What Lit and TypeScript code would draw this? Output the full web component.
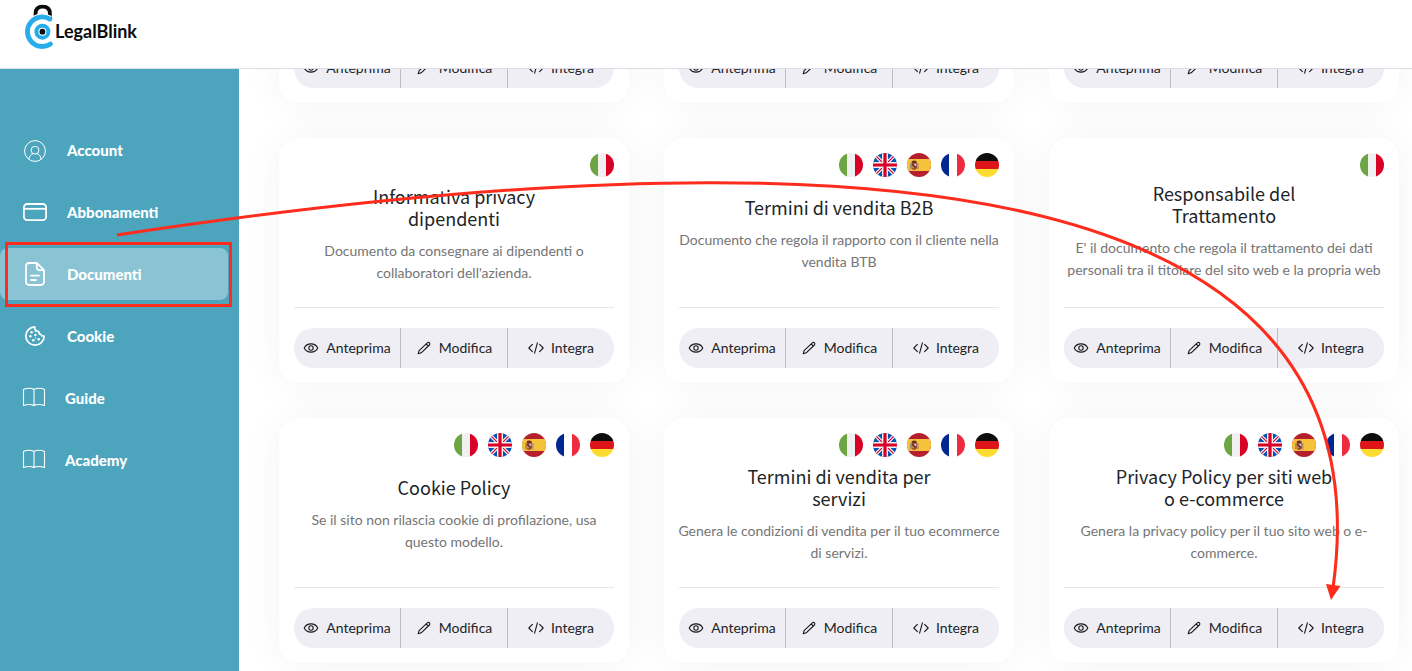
import { LitElement, html, svg, css, TemplateResult } from "lit";
import { customElement, property, query } from "lit/decorators.js";
import { classMap } from "lit/directives/class-map.js";

type Lang = "it" | "en" | "es" | "fr" | "de";

const LANG_NAMES: Record<Lang, string> = {
  it: "Italiano",
  en: "English",
  es: "Español",
  fr: "Français",
  de: "Deutsch",
};

const FLAGS: Record<Lang, TemplateResult> = {
  it: svg`<rect width="24" height="24" fill="#f0f0f0"/><rect width="8" height="24" fill="#6da544"/><rect x="16" width="8" height="24" fill="#d80027"/>`,
  en: svg`<rect width="24" height="24" fill="#0052b4"/>
    <path d="M0 0 24 24M24 0 0 24" stroke="#f0f0f0" stroke-width="3.6"/>
    <path d="M0 0 24 24M24 0 0 24" stroke="#d80027" stroke-width="1.2"/>
    <path d="M12 0V24M0 12H24" stroke="#f0f0f0" stroke-width="6"/>
    <path d="M12 0V24M0 12H24" stroke="#d80027" stroke-width="3.2"/>`,
  es: svg`<rect width="24" height="24" fill="#b5202f"/><rect y="6" width="24" height="12" fill="#f5c33b"/>
    <path d="M3.6 10V16.4M10.8 10V16.4" stroke="#a98c78" stroke-width="1.3"/>
    <path d="M4.6 10.200H9.800V14.500Q9.800 16.800 7.200 16.800 4.600 16.800 4.600 14.500Z" fill="#8c352f"/>
    <path d="M7.200 10.700H9.200V13H7.200Z" fill="#d9c9c9"/><path d="M5 13H7.200V15.800Q5 15.600 5 14.400Z" fill="#d98b2b"/>
    <path d="M4.800 10.200Q4 7.600 7.200 7.600 10.400 7.600 9.600 10.200Z" fill="#6e3024"/><circle cx="7.200" cy="13.200" r="1" fill="#3b3f77"/>`,
  fr: svg`<rect width="24" height="24" fill="#fff"/><rect width="8" height="24" fill="#00268f"/><rect x="16" width="8" height="24" fill="#ee2c3f"/>`,
  de: svg`<rect width="24" height="8" fill="#0d0d0d"/><rect y="8" width="24" height="8" fill="#dd1518"/><rect y="16" width="24" height="8" fill="#fedb30"/>`,
};

interface DocumentItem {
  title: string;
  text: string;
  langs: Lang[];
  clamped?: boolean;
}

const ALL: Lang[] = ["it", "en", "es", "fr", "de"];

const DOCUMENTS: DocumentItem[] = [
  { title: "", text: "", langs: ["it"] },
  { title: "", text: "", langs: ["it"] },
  { title: "", text: "", langs: ["it"] },
  {
    title: "Informativa privacy dipendenti",
    text: "Documento da consegnare ai dipendenti o collaboratori dell'azienda.",
    langs: ["it"],
  },
  {
    title: "Termini di vendita B2B",
    text: "Documento che regola il rapporto con il cliente nella vendita BTB",
    langs: ALL,
  },
  {
    title: "Responsabile del Trattamento",
    text: "E' il documento che regola il trattamento dei dati personali tra il titolare del sito web e la propria web",
    langs: ["it"],
    clamped: true,
  },
  {
    title: "Cookie Policy",
    text: "Se il sito non rilascia cookie di profilazione, usa questo modello.",
    langs: ALL,
  },
  {
    title: "Termini di vendita per servizi",
    text: "Genera le condizioni di vendita per il tuo ecommerce di servizi.",
    langs: ALL,
  },
  {
    title: "Privacy Policy per siti web o e-commerce",
    text: "Genera la privacy policy per il tuo sito web o e-commerce.",
    langs: ALL,
  },
];

@customElement("document-card")
class DocumentCard extends LitElement {
  @property({ attribute: false }) item!: DocumentItem;

  static styles = css`
    :host {
      display: block;
      position: relative;
    }
    .card {
      display: flex;
      flex-direction: column;
      box-sizing: border-box;
      min-height: 245px;
      padding: 15px;
      border-radius: 20px;
      background: #fff;
    }
    .flags {
      display: flex;
      justify-content: flex-end;
      gap: 10px;
      height: 24px;
    }
    .flag {
      width: 24px;
      height: 24px;
      border-radius: 50%;
    }
    .body {
      flex: 1;
      display: flex;
      flex-direction: column;
      justify-content: center;
      padding-bottom: 16px;
      text-align: center;
    }
    .title {
      margin: 0 auto 11px;
      max-width: 220px;
      font: 400 18px/22px "Noto Sans CJK JP", "Noto Sans", sans-serif;
      color: #212427;
    }
    .text {
      margin: 0 -5px;
      font-size: 14px;
      line-height: 22px;
      color: #757575;
    }
    .clamped {
      padding-bottom: 5px;
    }
    .actions {
      display: grid;
      grid-template-columns: 107fr 107fr 106fr;
      padding-top: 20px;
      border-top: 1px solid #e8e8e8;
    }
    .action {
      display: flex;
      align-items: center;
      justify-content: center;
      gap: 7px;
      height: 40px;
      padding: 0;
      border: 0;
      border-right: 1px solid #bdbcc2;
      background: #efeef4;
      font: 400 14px/20px Lato, sans-serif;
      color: #212427;
      cursor: pointer;
    }
    .action:first-child {
      border-radius: 20px 0 0 20px;
    }
    .action:last-child {
      border-right: 0;
      border-radius: 0 20px 20px 0;
    }
    .icon {
      width: 16px;
      height: 16px;
      fill: none;
      stroke: #17181a;
      stroke-width: 1.1;
      stroke-linecap: round;
      stroke-linejoin: round;
    }
  `;

  render() {
    const { title, text, langs, clamped } = this.item;
    return html`
      <article class="card">
        <div class="flags">
          ${langs.map(
            (l) => html`<svg class="flag" viewBox="0 0 24 24" role="img" aria-label=${LANG_NAMES[l]}>${FLAGS[l]}</svg>`
          )}
        </div>
        <div class="body">
          <h2 class="title">${title}</h2>
          <p class=${classMap({ text: true, clamped: !!clamped })}>${text}</p>
        </div>
        <div class="actions">
          <button class="action" type="button">
            <svg class="icon" viewBox="0 0 16 16" aria-hidden="true">
              <path d="M1.200 8C2.600 5.200 5 3.900 8 3.900S13.400 5.200 14.800 8C13.400 10.800 11 12.100 8 12.100S2.600 10.800 1.200 8Z" />
              <circle cx="8" cy="8" r="2.200" />
            </svg>
            Anteprima
          </button>
          <button class="action" type="button">
            <svg class="icon" viewBox="0 0 16 16" aria-hidden="true">
              <path d="M2.200 13.800 3.100 10.700 11.300 2.900Q12.500 1.900 13.500 2.900 14.400 3.900 13.400 5L5.200 12.800ZM10.200 4 12.300 6.100" />
            </svg>
            Modifica
          </button>
          <button class="action" type="button">
            <svg class="icon" viewBox="0 0 16 16" aria-hidden="true">
              <path d="M4.400 4.400.800 8 4.400 11.600M11.600 4.400 15.200 8 11.600 11.600M9.400 2.800 6.600 13.200" />
            </svg>
            Integra
          </button>
        </div>
      </article>
    `;
  }
}

const BOOK = svg`<g fill="none" stroke="#fff" stroke-width="1.1" stroke-linejoin="round">
  <path d="M12 3.500C9.500 1.800 4.500 1.800 1.500 3.500V19.500C4.500 18.300 9.500 18.300 12 19.500 14.500 18.300 19.500 18.300 22.500 19.500V3.500C19.500 1.800 14.500 1.800 12 3.500ZM12 3.500V19.500"/></g>`;

const NAV: { label: string; icon: TemplateResult; active?: boolean; narrow?: boolean }[] = [
  {
    label: "Account",
    icon: svg`<g fill="none" stroke="#fff" stroke-width="1"><circle cx="12" cy="13" r="10.400"/><circle cx="12" cy="12.200" r="3.900"/>
      <path d="M5.800 21.200C6.300 18 8.300 15.900 10.200 15.600M18.200 21.200C17.700 18 15.700 15.900 13.800 15.600"/></g>`,
  },
  {
    label: "Abbonamenti",
    icon: svg`<g fill="none" stroke="#fff" stroke-width="1.800"><rect x=".9" y="4" width="22.200" height="16.200" rx="3.400"/><path d="M1 8.800H23"/></g>`,
  },
  {
    label: "Documenti",
    active: true,
    icon: svg`<g fill="none" stroke="#fff" stroke-width="1.800" stroke-linecap="round" stroke-linejoin="round">
      <path d="M13.800 1H6.500Q3 1 3 4.500V19.500Q3 23 6.500 23H17.500Q21 23 21 19.500V8.200ZM13.800 1V5.500Q13.800 8.200 16.500 8.200H21M8 13.600H16M8 18H13"/></g>`,
  },
  {
    label: "Cookie",
    icon: svg`<path fill="none" stroke="#fff" stroke-width="1.700" stroke-linejoin="round" d="M11.800 2.800A9.200 9.200 0 1 0 21.200 12.200C19.500 12.300 18.300 11.700 17.800 10.500 16.400 10 15.600 8.900 15.700 7.500 13 7.400 11.300 5.300 11.800 2.800Z"/>
      <g fill="#fff"><circle cx="8.600" cy="8.200" r="1.200"/><circle cx="12.400" cy="11" r="1.200"/><circle cx="7.400" cy="12.300" r="1.200"/><circle cx="10.300" cy="16.300" r="1.300"/><circle cx="15.700" cy="15.200" r="1.300"/><circle cx="12.100" cy="7.200" r=".8"/><circle cx="12.600" cy="13.900" r=".7"/></g>`,
  },
  { label: "Guide", narrow: true, icon: BOOK },
  { label: "Academy", narrow: true, icon: BOOK },
];

@customElement("app-root")
class AppRoot extends LitElement {
  @query(".main") main!: HTMLElement;

  static styles = css`
    :host {
      display: flex;
      flex-direction: column;
      position: relative;
      height: 100vh;
      overflow: hidden;
      background: #fff;
      font-family: Lato, sans-serif;
    }
    .header {
      flex: none;
      display: flex;
      box-sizing: border-box;
      height: 69px;
      padding: 4px 24px;
      border-bottom: 1px solid #dddce6;
      background: #fff;
    }
    .brand {
      display: flex;
      align-items: flex-start;
      color: #0b0b0d;
      text-decoration: none;
    }
    .mark {
      width: 31px;
      height: 46px;
    }
    .name {
      padding-top: 16px;
      font-size: 18px;
      line-height: 22px;
      font-weight: 700;
    }
    .layout {
      flex: 1;
      display: flex;
      min-height: 0;
    }
    .nav {
      flex: none;
      display: flex;
      flex-direction: column;
      gap: 10px;
      box-sizing: border-box;
      width: 239px;
      padding: 55px 11px 0 0;
      background: #4ca4bd;
    }
    .link {
      display: flex;
      align-items: center;
      gap: 20px;
      height: 52px;
      padding-left: 23px;
      border-radius: 8px;
      font-size: 15px;
      line-height: 20px;
      font-weight: 900;
      color: #fff;
      text-decoration: none;
    }
    .narrow {
      gap: 19px;
      padding-left: 22px;
    }
    .active {
      background: #8ac3d4;
    }
    .glyph {
      width: 24px;
      height: 24px;
    }
    .main {
      flex: 1;
      overflow-y: auto;
      scrollbar-width: none;
    }
    .grid {
      display: grid;
      grid-template-columns: repeat(3, 1fr);
      gap: 35px;
      padding: 40px 13px 40px 40px;
      isolation: isolate;
    }
    .cell::before {
      content: "";
      position: absolute;
      inset: 0;
      z-index: -1;
      border-radius: 20px;
      box-shadow: 0 0 40px rgba(0, 0, 0, 0.05);
    }
    .notes {
      position: absolute;
      top: 0;
      left: 0;
      width: 1412px;
      height: 671px;
      pointer-events: none;
    }
  `;

  firstUpdated() {
    requestAnimationFrame(() => {
      this.main.scrollTop = 251;
    });
  }

  render() {
    return html`
      <header class="header">
        <a class="brand" href="#">
          <svg class="mark" viewBox="0 0 31 46" aria-hidden="true">
            <path d="M11.600 14V9.500Q11.600 2.700 18.600 2.700 25.900 2.700 25.900 9.500V15" fill="none" stroke="#0b0b0d" stroke-width="3.800" />
            <path d="M26 15.100A14.800 14.800 0 1 0 26.500 40" fill="none" stroke="#fff" stroke-width="7" />
            <path d="M26 15.100A14.800 14.800 0 1 0 26.500 40" fill="none" stroke="#27aeea" stroke-width="4.800" stroke-linecap="round" />
            <circle cx="18.400" cy="27.700" r="6" fill="none" stroke="#27aeea" stroke-width="4" />
            <circle cx="18.400" cy="27.700" r="2.900" fill="#0b0b0d" />
          </svg>
          <span class="name">LegalBlink</span>
        </a>
      </header>
      <div class="layout">
        <nav class="nav">
          ${NAV.map(
            (n) => html`<a class=${classMap({ link: true, active: !!n.active, narrow: !!n.narrow })} href="#">
              <svg class="glyph" viewBox="0 0 24 24" aria-hidden="true">${n.icon}</svg>${n.label}</a>`
          )}
        </nav>
        <main class="main">
          <div class="grid">
            ${DOCUMENTS.map((d) => html`<document-card class="cell" .item=${d}></document-card>`)}
          </div>
        </main>
      </div>
      <svg class="notes" viewBox="0 0 1412 671" aria-hidden="true">
        <g fill="none" stroke="#fd2c1c" stroke-width="3">
          <rect x="6.500" y="243.500" width="224" height="62" />
          <path d="M117 235C910 115 1389 188 1333 588" />
        </g>
        <path d="M1326 584 1340.500 586 1331 600Z" fill="#fd2c1c" />
      </svg>
    `;
  }
}
